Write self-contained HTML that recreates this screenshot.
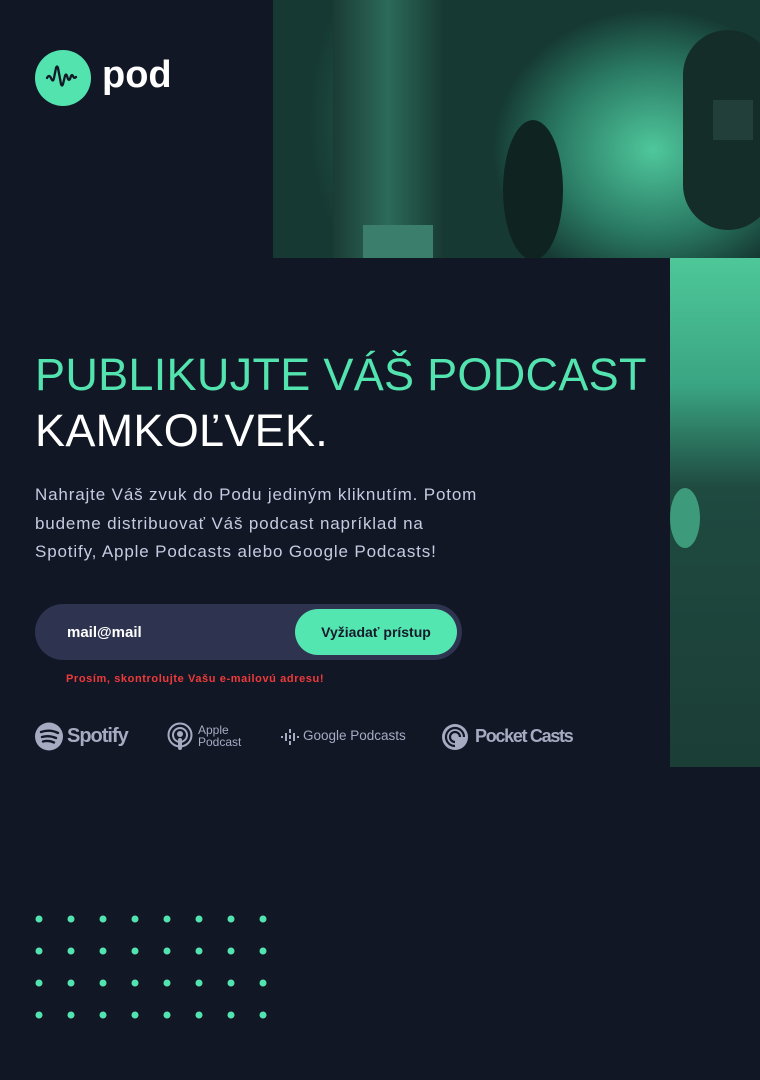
<!DOCTYPE html>
<html><head><meta charset="utf-8"><style>
*{margin:0;padding:0;box-sizing:border-box}
body{width:760px;height:1080px;background:#121726;font-family:"Liberation Sans",sans-serif;position:relative;overflow:hidden}
.photo{position:absolute;left:273px;top:0;width:487px;height:258px;background:radial-gradient(ellipse 160px 140px at 380px 150px,#4fc79c,#2a7a63 60%,transparent 100%),radial-gradient(ellipse 90px 200px at 100px 120px,#24584c,#163a33 70%),#1a3f37;overflow:hidden}
.strip{position:absolute;left:670px;top:258px;width:90px;height:509px;background:linear-gradient(180deg,#4ec799 0%,#3aa582 25%,#1f4a40 45%,#1b3e36 100%)}
.a{position:absolute}
</style></head><body>
<div class="photo">
<div class="a" style="left:60px;top:0;width:110px;height:258px;background:linear-gradient(90deg,#1a3c34,#2c6a59 50%,#183a32)"></div>
<div class="a" style="left:90px;top:225px;width:70px;height:33px;background:#3c7e6c"></div>
<div class="a" style="left:230px;top:120px;width:60px;height:140px;border-radius:50%;background:#0f2420"></div>
<div class="a" style="left:410px;top:30px;width:90px;height:200px;border-radius:45px;background:#142d28"></div>
<div class="a" style="left:440px;top:100px;width:40px;height:40px;background:#233f39"></div>
</div>
<div class="strip">
<div class="a" style="left:0;top:230px;width:30px;height:60px;border-radius:50%;background:#3d9a7a"></div>
</div>
<svg class="a" style="left:35px;top:50px" width="56" height="56" viewBox="0 0 56 56"><circle cx="28" cy="28" r="28" fill="#52e3ae"/><path d="M12 28 q2 -4 4 0 q2 5 3 0 l2 -10 q1 -3 2 0 l3 16 q1 3 2 0 l2 -8 q1 -3 2 0 l1 3 q1 2 2 0 l1 -3 q1 -2 2 0 q1 3 3 1" fill="none" stroke="#111826" stroke-width="2.3" stroke-linecap="round" stroke-linejoin="round"/></svg>
<div class="a" style="left:102px;top:54px;font-size:38px;font-weight:bold;color:#fff">pod</div>
<div class="a" style="left:35px;top:348px;font-size:45px;color:#52e3ae;line-height:54px;white-space:nowrap;letter-spacing:0.3px">PUBLIKUJTE VÁŠ PODCAST</div>
<div class="a" style="left:35px;top:404px;font-size:45px;color:#fff;line-height:54px;letter-spacing:0.3px">KAMKOĽVEK.</div>
<div class="a" style="left:35px;top:481px;font-size:17px;color:#c5cbe0;line-height:28.5px;white-space:nowrap;letter-spacing:0.85px">Nahrajte Váš zvuk do Podu jediným kliknutím. Potom<br>budeme distribuovať Váš podcast napríklad na<br>Spotify, Apple Podcasts alebo Google Podcasts!</div>
<div class="a" style="left:35px;top:604px;width:427px;height:56px;border-radius:28px;background:#2e3450"></div>
<div class="a" style="left:67px;top:624px;font-size:15px;font-weight:bold;color:#fff">mail@mail</div>
<div class="a" style="left:295px;top:609px;width:162px;height:46px;border-radius:23px;background:#54e6b0;font-size:14px;font-weight:bold;color:#141a2a;text-align:center;line-height:46px">Vyžiadať prístup</div>
<div class="a" style="left:66px;top:673px;font-size:11px;font-weight:bold;color:#f03a3a;letter-spacing:0.6px">Prosím, skontrolujte Vašu e-mailovú adresu!</div>
<svg class="a" style="left:35px;top:722px" width="30" height="30" viewBox="0 0 30 30"><circle cx="14" cy="14.5" r="14" fill="#a6abc2"/><path d="M6 10 q9 -3 17 1 M7 15 q7 -2 14 1 M8 19.5 q6 -1.5 11 1" stroke="#121726" stroke-width="2.4" fill="none" stroke-linecap="round"/></svg>
<div class="a" style="left:67px;top:725px;font-size:20px;font-weight:bold;color:#a6abc2;letter-spacing:-1px">Spotify</div>
<svg class="a" style="left:166px;top:722px" width="28" height="30" viewBox="0 0 28 30"><circle cx="14" cy="13" r="11.5" fill="none" stroke="#a6abc2" stroke-width="2"/><circle cx="14" cy="13" r="7" fill="none" stroke="#a6abc2" stroke-width="2"/><circle cx="14" cy="12" r="3" fill="#a6abc2"/><rect x="12" y="16" width="4" height="12" rx="2" fill="#a6abc2"/></svg>
<div class="a" style="left:198px;top:724px;font-size:12px;color:#a6abc2;line-height:12px">Apple<br>Podcast</div>
<svg class="a" style="left:281px;top:728px" width="18" height="18" viewBox="0 0 18 18" fill="#a6abc2"><rect x="0" y="8" width="2" height="2"/><rect x="4" y="5" width="2" height="8"/><rect x="8" y="1" width="2" height="4"/><rect x="8" y="7" width="2" height="4"/><rect x="8" y="13" width="2" height="4"/><rect x="12" y="5" width="2" height="8"/><rect x="16" y="8" width="2" height="2"/></svg>
<div class="a" style="left:303px;top:728px;font-size:13.5px;color:#a6abc2">Google Podcasts</div>
<svg class="a" style="left:441px;top:723px" width="28" height="28" viewBox="0 0 28 28"><circle cx="14" cy="14" r="13" fill="#a6abc2"/><path d="M14 23 a9 9 0 1 1 9 -9 M14 19 a5 5 0 1 1 5 -5" stroke="#121726" stroke-width="2.2" fill="none"/></svg>
<div class="a" style="left:475px;top:726px;font-size:18px;font-weight:bold;color:#a6abc2;letter-spacing:-1.3px">Pocket Casts</div>
<svg class="a" style="left:35px;top:915px" width="240" height="110" fill="#52e3ae">
<g id="r"><circle cx="4" cy="4" r="3.5"/><circle cx="36" cy="4" r="3.5"/><circle cx="68" cy="4" r="3.5"/><circle cx="100" cy="4" r="3.5"/><circle cx="132" cy="4" r="3.5"/><circle cx="164" cy="4" r="3.5"/><circle cx="196" cy="4" r="3.5"/><circle cx="228" cy="4" r="3.5"/></g>
<use href="#r" y="32"/><use href="#r" y="64"/><use href="#r" y="96"/>
</svg>
</body></html>
